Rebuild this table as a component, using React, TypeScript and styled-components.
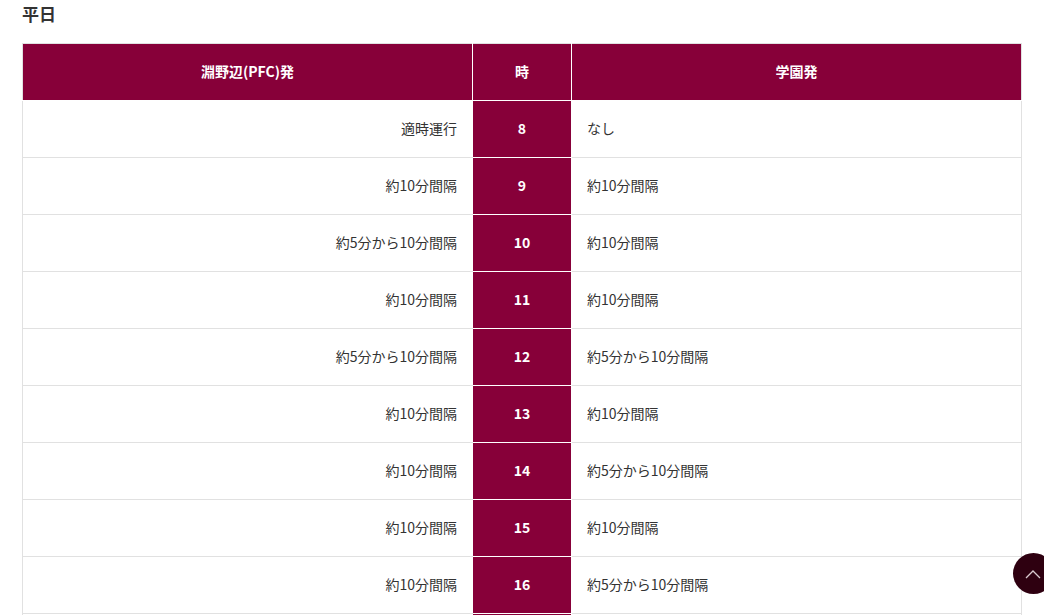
import React from "react";
import styled, { createGlobalStyle } from "styled-components";

const Global = createGlobalStyle`
  html, body { margin: 0; padding: 0; background: #fff; }
  body { font-family: "Noto Sans CJK JP", "Noto Sans", sans-serif; color: #333; }
`;

const Page = styled.div`
  padding: 0 23px 0 22px;
`;

const Title = styled.h2`
  margin: 0;
  padding-top: 3px;
  height: 40px;
  font-size: 17px;
  font-weight: 700;
  line-height: 22px;
  color: #333;
`;

const Table = styled.table`
  width: 999px;
  border-collapse: collapse;
  table-layout: fixed;
  border: 1px solid #e1e1e1;
`;

const HeadCell = styled.th`
  height: 54px;
  padding: 0 0 2px;
  background: #870039;
  color: #fff;
  font-size: 14px;
  font-weight: 700;
  text-align: center;
  border-left: 1px solid #fff;
  border-right: 1px solid #fff;
  border-bottom: 1px solid #fff;
  &:first-child { border-left: 1px solid #e1e1e1; }
  &:last-child { border-right: 1px solid #e1e1e1; }
`;

const Cell = styled.td<{ $align: "left" | "right" }>`
  height: 53px;
  padding: 0 15px 3px;
  font-size: 14px;
  color: #333;
  text-align: ${(p) => p.$align};
  border-bottom: 1px solid #e1e1e1;
`;

const HourCell = styled.td`
  height: 53px;
  padding: 0 0 3px;
  background: #870039;
  color: #fff;
  font-size: 14px;
  font-weight: 700;
  text-align: center;
  border: 1px solid #fff;
`;

const TopButton = styled.button`
  position: fixed;
  left: 1013px;
  top: 553px;
  width: 41px;
  height: 41px;
  border-radius: 50%;
  border: none;
  padding: 0;
  background: #2e0010;
  display: flex;
  align-items: center;
  justify-content: center;
  cursor: pointer;
`;

const rows: [string, string, string][] = [
  ["適時運行", "8", "なし"],
  ["約10分間隔", "9", "約10分間隔"],
  ["約5分から10分間隔", "10", "約10分間隔"],
  ["約10分間隔", "11", "約10分間隔"],
  ["約5分から10分間隔", "12", "約5分から10分間隔"],
  ["約10分間隔", "13", "約10分間隔"],
  ["約10分間隔", "14", "約5分から10分間隔"],
  ["約10分間隔", "15", "約10分間隔"],
  ["約10分間隔", "16", "約5分から10分間隔"],
  ["約10分間隔", "17", "約10分間隔"],
];

export default function App() {
  return (
    <Page>
      <Global />
      <Title>平日</Title>
      <Table>
        <colgroup>
          <col style={{ width: 450 }} />
          <col style={{ width: 99 }} />
          <col style={{ width: 450 }} />
        </colgroup>
        <thead>
          <tr>
            <HeadCell>淵野辺(PFC)発</HeadCell>
            <HeadCell>時</HeadCell>
            <HeadCell>学園発</HeadCell>
          </tr>
        </thead>
        <tbody>
          {rows.map(([a, h, b]) => (
            <tr key={h}>
              <Cell $align="right">{a}</Cell>
              <HourCell>{h}</HourCell>
              <Cell $align="left">{b}</Cell>
            </tr>
          ))}
        </tbody>
      </Table>
      <TopButton aria-label="ページトップへ">
        <svg width="16" height="10" viewBox="0 0 16 10" fill="none" style={{ marginRight: 2 }}>
          <path d="M1 9 L8 2 L15 9" stroke="#d9c9cf" strokeWidth="1.3" />
        </svg>
      </TopButton>
    </Page>
  );
}
